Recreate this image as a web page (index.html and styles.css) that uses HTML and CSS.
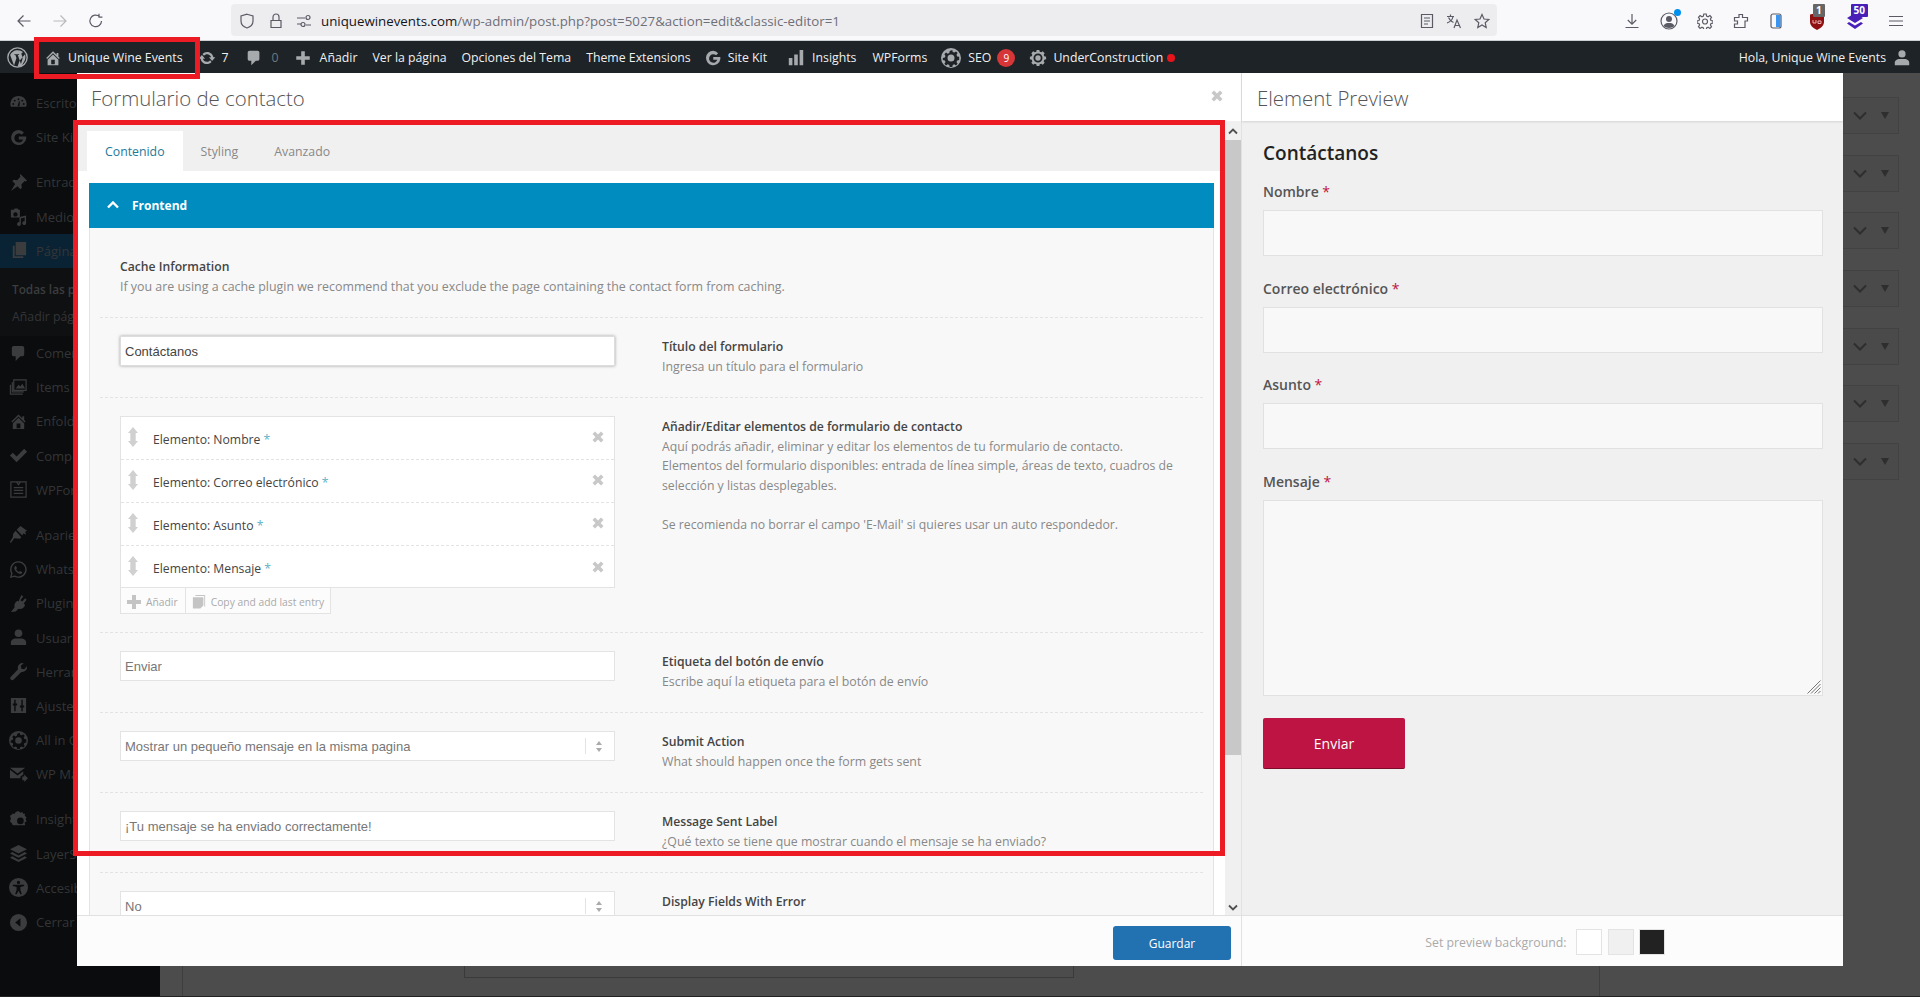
FILE: index.html
```html
<!DOCTYPE html>
<html lang="es">
<head>
<meta charset="UTF-8">
<title>Formulario de contacto</title>
<link rel="stylesheet" href="styles.css">
</head>
<body>
<svg class="defs" width="0" height="0">
  <symbol id="i-x" viewBox="0 0 12 12"><path d="M3 0.5 6 3.5 9 0.5 11.5 3 8.5 6 11.5 9 9 11.5 6 8.5 3 11.5 0.5 9 3.5 6 0.5 3z"/></symbol>
  <symbol id="i-sort" viewBox="0 0 12 20"><path d="M6 0 11 6H8.700v8H11L6 20 1 14H3.300V6H1z"/></symbol>
  <symbol id="i-updown" viewBox="0 0 6 11"><path d="M3 0 6 4H0zM3 11 0 7h6z"/></symbol>
  <symbol id="i-chev" viewBox="0 0 14 9"><path d="M1 1.5 7 7.5 13 1.5" fill="none" stroke="currentColor" stroke-width="2"/></symbol>
  <symbol id="i-tri" viewBox="0 0 8 7"><path d="M0 0H8L4 7z"/></symbol>
  <symbol id="i-home" viewBox="0 0 20 20"><path d="M16 8.5l1.53 1.53-1.06 1.06L10 4.62l-6.47 6.47-1.06-1.06L10 2.5l4 4v-2h2v4zm-6-2.46l6 5.99V18H4v-5.97zM12 17v-5H8v5h4z"/></symbol>
  <symbol id="i-comment" viewBox="0 0 20 20"><path d="M5 2h9c1.1 0 2 .9 2 2v7c0 1.1-.9 2-2 2h-2l-5 5v-5H5c-1.1 0-2-.9-2-2V4c0-1.1.9-2 2-2z"/></symbol>
  <symbol id="i-g" viewBox="0 0 20 20"><path d="M10.2 2a8 8 0 1 0 7.9 9.3c.1-.8.1-1.600 0-2.300h-7.800v3h4.500a4.700 4.700 0 1 1-1.400-5l2.300-2.300A8 8 0 0 0 10.200 2z"/></symbol>
  <symbol id="i-gear" viewBox="0 0 20 20"><path fill-rule="evenodd" d="M10 0a10 10 0 1 1 0 20 10 10 0 0 1 0-20zM8.700 3l-.4 2-1.600.7-1.700-1.100-1.600 1.700 1.100 1.600-.7 1.600-2 .4v2.200l2 .4.700 1.600-1.100 1.700 1.600 1.600 1.700-1.100 1.600.7.4 2h2.600l.4-2 1.600-.7 1.700 1.100 1.600-1.600-1.100-1.700.7-1.600 2-.4V8.800l-2-.4-.7-1.600 1.100-1.700-1.600-1.600-1.700 1.100-1.600-.7-.4-2zM10 6.500a3.500 3.500 0 1 1 0 7 3.500 3.500 0 0 1 0-7z"/></symbol>
  <symbol id="i-user" viewBox="0 0 20 20"><circle cx="10" cy="5.500" r="4"/><path d="M2 18v-3c0-2.500 3-4 5-4h6c2 0 5 1.500 5 4v3z"/></symbol>
  <symbol id="i-dash" viewBox="0 0 20 20"><path fill-rule="evenodd" d="M10 2a8.500 8.500 0 0 1 8 11.500H2A8.500 8.500 0 0 1 10 2zM6 6a1 1 0 1 0 0 2 1 1 0 0 0 0-2zm4-1.500a1 1 0 1 0 0 2 1 1 0 0 0 0-2zm4 1.500a1 1 0 1 0 0 2 1 1 0 0 0 0-2zM4.500 9.500a1 1 0 1 0 0 2 1 1 0 0 0 0-2zm11 0a1 1 0 1 0 0 2 1 1 0 0 0 0-2zM9 13h2l.5-5-1-.5z"/></symbol>
  <symbol id="i-pin" viewBox="0 0 20 20"><path d="M12 1l7 7-1.500 1-1-.5-3.500 3.500.5 3.500-1.500 1.500-3-3L2 19l4.500-7.500-3-3L5 7l3.500.5L12 4l-.5-1.500z"/></symbol>
  <symbol id="i-media" viewBox="0 0 20 20"><path fill-rule="evenodd" d="M2 3h3l1-1.500h3L10 3h1.500v8H2zm4.800 2.500a2.300 2.300 0 1 0 0 4.600 2.300 2.300 0 0 0 0-4.600zM18 9v8a2 2 0 1 1-1.500-2V11l-4 1v6a2 2 0 1 1-1.500-2v-5.500z"/></symbol>
  <symbol id="i-page" viewBox="0 0 20 20"><path d="M7 1h11v14H7zM4 5h2v11h9v2H4z"/></symbol>
  <symbol id="i-items" viewBox="0 0 20 20"><path fill="none" stroke="currentColor" stroke-width="1.300" d="M5 2h13v11H5zM3.500 4.500v10h12M1.500 7v10h13"/><path d="M7 11l3-4 2 2 2-3 3 5z"/></symbol>
  <symbol id="i-check" viewBox="0 0 20 20"><path d="M1 10l3-3 4 4 8-8 3 3L8 17z"/></symbol>
  <symbol id="i-form" viewBox="0 0 20 20"><path fill="none" stroke="currentColor" stroke-width="1.300" d="M2 2h16v16H2zM5 8h10M5 11h10M5 14h10M8 2l2 3 2-3"/></symbol>
  <symbol id="i-brush" viewBox="0 0 20 20"><path d="M8 5l4-4 7 5-2 1 1 3-3-1-1 2zM7 6l6 7-1.500 1.500-6-.5L2 19l-1-1 3-5 .5-4z"/></symbol>
  <symbol id="i-whats" viewBox="0 0 20 20"><path fill="none" stroke="currentColor" stroke-width="1.500" d="M10 2a8 8 0 1 1-4 15l-4 1 1-4A8 8 0 0 1 10 2z"/><path d="M7 6l1.500 2.500-1 1.200c.7 1.300 1.600 2.200 3 2.900l1.200-1 2.300 1.400c-.3 1.500-1.800 2-3 1.600C8.500 14 6 11.500 5.600 9 5.400 7.800 6 6.500 7 6z"/></symbol>
  <symbol id="i-plug" viewBox="0 0 20 20"><path d="M13 1l2 1.500-3 4 2 1.500 3-3.500 1.500 1.500-3 4 1.500 1.500c-1 3-4 5-7 4l-3 3-5 .5 4-5c-1-3 1-6 3-7l1 1z"/></symbol>
  <symbol id="i-wrench" viewBox="0 0 20 20"><path d="M14 1a5 5 0 0 1 1.500.2L12.500 4l.5 3 3 .5 2.800-3A5 5 0 0 1 13 10.500L5 18.500a2 2 0 0 1-3-3L9.500 7.500A5 5 0 0 1 14 1z"/></symbol>
  <symbol id="i-sliders" viewBox="0 0 20 20"><path fill-rule="evenodd" d="M2 2h16v16H2zm3.500 2v4H4v2h1.500v6h1.500v-6h1.500V8H7V4zm7.500 0v6h-1.500v2H13v4h1.500v-4H16v-2h-1.500V4z"/></symbol>
  <symbol id="i-mail" viewBox="0 0 20 20"><path d="M1 3h16l-8 6zM1 5l8 6 6-4.500V10l-3 2v2H1zM14 12h2v-2l4 4-4 4v-2h-2z"/></symbol>
  <symbol id="i-insight" viewBox="0 0 20 20"><path fill-rule="evenodd" d="M10 1l2 2 2-1 1 2h2l-.5 2 2 1.500-1 2 1 2.500-2 1 .5 3H4l-1-2-2-2 1-3-1-3 2-1V4h3l1-2zm2 7a3.500 3.500 0 1 0 0 7 3.500 3.500 0 0 0 0-7z"/></symbol>
  <symbol id="i-layers" viewBox="0 0 20 20"><path d="M10 1l9 4.500L10 10 1 5.500zM3.500 8.500L10 12l6.500-3.500 2.500 1.500-9 4.500L1 10zM3.500 13L10 16.500 16.500 13l2.500 1.500L10 19l-9-4.500z"/></symbol>
  <symbol id="i-access" viewBox="0 0 20 20"><path fill-rule="evenodd" d="M10 0a10 10 0 1 1 0 20 10 10 0 0 1 0-20zm0 3a1.700 1.700 0 1 0 0 3.400A1.700 1.700 0 0 0 10 3zM4 7v1.500l4 1v3L6.500 17H8l2-3.500 2 3.500h1.500L12 12.500v-3l4-1V7z"/></symbol>
  <symbol id="i-back" viewBox="0 0 20 20"><path fill-rule="evenodd" d="M10 1a9 9 0 1 1 0 18 9 9 0 0 1 0-18zm2 4.500L6.500 10l5.500 4.500z"/></symbol>
</svg>

<header class="browser-bar">
  <div class="nav-btns">
    <svg class="tool" viewBox="0 0 16 16"><path d="M14.500 8H2M7.500 2.500 2 8l5.500 5.500"/></svg>
    <svg class="tool tool-off" viewBox="0 0 16 16"><path d="M1.500 8H14M8.500 2.500 14 8l-5.500 5.500"/></svg>
    <svg class="tool" viewBox="0 0 16 16"><path d="M13.500 8A5.800 5.800 0 1 1 11.500 3.500M11 .8v3.400h3.400"/></svg>
  </div>
  <div class="url-bar">
    <svg class="tool" viewBox="0 0 16 16"><path d="M8 1.200 14 3v5c0 3.500-3 6-6 7-3-1-6-3.500-6-7V3z"/></svg>
    <svg class="tool tool-lock" viewBox="0 0 16 16"><path d="M3 7.500h10V14.500H3zM5 7.500V4a3 3 0 0 1 6 0v3.500"/></svg>
    <svg class="tool tool-perm" viewBox="0 0 16 16"><path d="M1 5h8M1 11h4M10 12h5"/><circle cx="12" cy="4.500" r="2"/><circle cx="7" cy="11.500" r="2"/></svg>
    <div class="url-text"><span class="url-host">uniquewinevents.com</span>/wp-admin/post.php?post=5027&amp;action=edit&amp;classic-editor=1</div>
    <div class="url-actions">
      <svg class="tool" viewBox="0 0 16 16"><path d="M2.500 1.500h11v13h-11zM5 5h6M5 8h6M5 11h4"/></svg>
      <svg class="tool tool-trans" viewBox="0 0 16 16"><path d="M1 3.500h7M4.500 1.500v2M7 3.500c-.5 3-3 5.500-6 6.500M2.500 4.500c1 2.500 2.500 4 5 5M8 15l3-8 3.500 8M9 12.500h5"/></svg>
      <svg class="tool" viewBox="0 0 16 16"><path d="M8 1.500 10 6l4.800.5-3.600 3.200 1 4.800L8 12l-4.200 2.500 1-4.800L1.200 6.500 6 6z"/></svg>
    </div>
  </div>
  <div class="browser-tools">
    <svg class="tool" viewBox="0 0 16 16"><path d="M8 1v10M3.800 7 8 11.200 12.200 7M1.500 14.500h13"/></svg>
    <div class="tool-acc">
      <svg class="tool tool-large" viewBox="0 0 18 18"><circle cx="9" cy="9" r="8"/><circle class="solid" cx="9" cy="7" r="3"/><path class="solid" d="M3.500 14c1-2.500 3-3 5.500-3s4.500.5 5.500 3c-3 2.600-8 2.600-11 0z"/></svg>
      <span class="acc-dot"></span>
    </div>
    <svg class="tool" viewBox="0 0 16 16"><path d="M6.800 1h2.400l.4 2 1.500.7 1.800-1.100 1.600 1.700-1.100 1.700.6 1.500 2 .4v2.200l-2 .4-.6 1.500 1.100 1.700-1.600 1.700-1.800-1.100-1.500.7-.4 2H6.800l-.4-2-1.500-.7-1.800 1.100-1.600-1.700 1.100-1.700-.6-1.500-2-.4V7.900l2-.4.6-1.500-1.100-1.700 1.600-1.700 1.800 1.100 1.500-.7z"/><circle cx="8" cy="8.500" r="2.500"/></svg>
    <svg class="tool" viewBox="0 0 16 16"><path d="M6 1.500h3.500v3h5v3.500H12v6.500H1.500V11h3V8h-3V4.500H6z"/></svg>
    <svg class="tool" viewBox="0 0 16 16"><rect x="3" y="1" width="10" height="14" rx="2"/><path class="phone-fill" d="M8 2h4a.6.6 0 0 1 .5.500V13.500a.6.6 0 0 1-.5.500H8z"/></svg>
    <div class="ext ext-first">
      <svg class="ext-icon" viewBox="0 0 16 18"><path fill="#8f1010" d="M1 2.500 8 1l7 1.500V10c0 3.500-3.500 6.500-7 8-3.500-1.500-7-4.500-7-8z"/><path fill="none" stroke="#e8b0b0" stroke-width="1" d="M4 8v3h3V8M9 9h3v2.500H9z"/></svg>
      <span class="ext-badge ext-badge-grey">1</span>
    </div>
    <div class="ext">
      <svg class="ext-icon" viewBox="0 0 18 18"><path fill="#4a1fb8" d="M9 1l8 5-8 5-8-5zM3 10l6 3.500L15 10l2 1.500L9 17l-8-5.500z"/></svg>
      <span class="ext-badge ext-badge-purple">50</span>
    </div>
    <svg class="tool tool-menu" viewBox="0 0 14 12"><path d="M0 1.500h14M0 6h14M0 10.500h14"/></svg>
  </div>
</header>

<nav class="admin-bar">
  <div class="ab-item ab-logo">
    <svg viewBox="0 0 20 20" class="ab-icon-wp"><circle cx="10" cy="10" r="9.200" fill="none" stroke="currentColor" stroke-width="1.300"/><path d="M3 7.500l3.700 10 2.300-7-1-3H7V6.800h4.500v.7h-1.200l3 8.800 1.500-5c.6-2-.8-3.200-1-4.500-.1-1 .8-1.800 1.700-1.700A8 8 0 0 0 3 7.500zM17.200 7c.7 2.500.4 5-1.300 7.500L14 18c-1.300.6-2.500.9-4 .8l2-5.800z"/></svg>
  </div>
  <div class="ab-item ab-site"><svg class="ab-icon"><use href="#i-home"/></svg>Unique Wine Events</div>
  <div class="ab-item">
    <svg class="ab-icon" viewBox="0 0 20 20"><path d="M10.200 3.280c3.530 0 6.430 2.610 6.920 6h2.080l-3.500 4-3.500-4h2.320c-.45-1.970-2.210-3.450-4.320-3.450-1.450 0-2.730.71-3.540 1.780L4.950 5.660C6.230 4.200 8.110 3.280 10.200 3.280zm-.4 13.440c-3.520 0-6.430-2.610-6.920-6H.8l3.500-4c1.170 1.330 2.330 2.670 3.500 4H5.480c.45 1.970 2.210 3.450 4.320 3.450 1.450 0 2.730-.71 3.540-1.780l1.710 1.950c-1.280 1.460-3.150 2.380-5.250 2.380z"/></svg>7
  </div>
  <div class="ab-item ab-muted"><svg class="ab-icon"><use href="#i-comment"/></svg>0</div>
  <div class="ab-item ab-add"><svg class="ab-icon" viewBox="0 0 20 20"><path d="M8 2.500h4v5.500h5.500v4H12v5.500H8V12H2.500V8H8z"/></svg>Añadir</div>
  <div class="ab-item">Ver la página</div>
  <div class="ab-item">Opciones del Tema</div>
  <div class="ab-item">Theme Extensions</div>
  <div class="ab-item ab-kit"><svg class="ab-icon"><use href="#i-g"/></svg>Site Kit</div>
  <div class="ab-item ab-bars"><svg class="ab-icon" viewBox="0 0 20 20"><path d="M2 10h4v8H2zM8 6h4v12H8zM14 1h4v17h-4z"/></svg>Insights</div>
  <div class="ab-item ab-wpforms">WPForms</div>
  <div class="ab-item ab-seo"><svg class="ab-icon ab-icon-seo"><use href="#i-gear"/></svg>SEO<span class="ab-badge">9</span></div>
  <div class="ab-item ab-under"><svg class="ab-icon" viewBox="0 0 20 20"><path fill-rule="evenodd" d="M8.500 1h3l.4 2 1.700.7 1.700-1.100 2.100 2.100-1.100 1.700.7 1.700 2 .4v3l-2 .4-.7 1.700 1.100 1.700-2.100 2.100-1.700-1.100-1.700.7-.4 2h-3l-.4-2-1.700-.7-1.700 1.100-2.100-2.100 1.100-1.700-.7-1.700-2-.4v-3l2-.4.7-1.700-1.100-1.700 2.100-2.100 1.700 1.100 1.700-.7zM10 5a5 5 0 1 0 0 10 5 5 0 0 0 0-10zm0 2a3 3 0 1 1 0 6 3 3 0 0 1 0-6z"/></svg>UnderConstruction<span class="ab-dot"></span></div>
  <div class="ab-item ab-account">Hola, Unique Wine Events<svg class="ab-icon"><use href="#i-user"/></svg></div>
</nav>

<div class="stage">
  <aside class="wp-menu">
    <div class="menu-row"><svg><use href="#i-dash"/></svg>Escritorio</div>
    <div class="menu-row"><svg><use href="#i-g"/></svg>Site Kit</div>
    <div class="menu-row menu-gap"><svg><use href="#i-pin"/></svg>Entradas</div>
    <div class="menu-row"><svg><use href="#i-media"/></svg>Medios</div>
    <div class="menu-row menu-active"><svg><use href="#i-page"/></svg>Páginas</div>
    <div class="menu-sub">
      <div class="sub-row sub-current">Todas las páginas</div>
      <div class="sub-row">Añadir página nueva</div>
    </div>
    <div class="menu-row"><svg><use href="#i-comment"/></svg>Comentarios</div>
    <div class="menu-row"><svg><use href="#i-items"/></svg>Items</div>
    <div class="menu-row"><svg><use href="#i-home"/></svg>Enfold</div>
    <div class="menu-row"><svg><use href="#i-check"/></svg>Compras</div>
    <div class="menu-row"><svg><use href="#i-form"/></svg>WPForms</div>
    <div class="menu-row menu-gap"><svg><use href="#i-brush"/></svg>Apariencia</div>
    <div class="menu-row"><svg><use href="#i-whats"/></svg>WhatsApp</div>
    <div class="menu-row"><svg><use href="#i-plug"/></svg>Plugins</div>
    <div class="menu-row"><svg><use href="#i-user"/></svg>Usuarios</div>
    <div class="menu-row"><svg><use href="#i-wrench"/></svg>Herramientas</div>
    <div class="menu-row"><svg><use href="#i-sliders"/></svg>Ajustes</div>
    <div class="menu-row"><svg><use href="#i-gear"/></svg>All in One SEO</div>
    <div class="menu-row"><svg><use href="#i-mail"/></svg>WP Mail SMTP</div>
    <div class="menu-row menu-gap"><svg><use href="#i-insight"/></svg>Insights</div>
    <div class="menu-row"><svg><use href="#i-layers"/></svg>LayerSlider</div>
    <div class="menu-row"><svg><use href="#i-access"/></svg>Accesibilidad</div>
    <div class="menu-row"><svg><use href="#i-back"/></svg>Cerrar menú</div>
  </aside>

  <main class="wp-main">
    <div class="wp-edit"><div class="wp-box"></div></div>
    <div class="wp-drops">
      <div class="drop"><svg class="drop-chev"><use href="#i-chev"/></svg><svg class="drop-tri"><use href="#i-tri"/></svg></div>
      <div class="drop"><svg class="drop-chev"><use href="#i-chev"/></svg><svg class="drop-tri"><use href="#i-tri"/></svg></div>
      <div class="drop"><svg class="drop-chev"><use href="#i-chev"/></svg><svg class="drop-tri"><use href="#i-tri"/></svg></div>
      <div class="drop"><svg class="drop-chev"><use href="#i-chev"/></svg><svg class="drop-tri"><use href="#i-tri"/></svg></div>
      <div class="drop"><svg class="drop-chev"><use href="#i-chev"/></svg><svg class="drop-tri"><use href="#i-tri"/></svg></div>
      <div class="drop"><svg class="drop-chev"><use href="#i-chev"/></svg><svg class="drop-tri"><use href="#i-tri"/></svg></div>
      <div class="drop"><svg class="drop-chev"><use href="#i-chev"/></svg><svg class="drop-tri"><use href="#i-tri"/></svg></div>
    </div>
  </main>

  <!-- ventana modal del elemento -->
  <section class="modal">
    <div class="modal-left">
      <div class="modal-head">
        <h1 class="modal-title">Formulario de contacto</h1>
        <svg class="modal-close"><use href="#i-x"/></svg>
      </div>
      <div class="modal-scroll">
        <div class="modal-content">
          <div class="tabs">
            <div class="tab tab-active">Contenido</div>
            <div class="tab">Styling</div>
            <div class="tab">Avanzado</div>
          </div>
          <div class="toggle-head">
            <svg class="toggle-chev" viewBox="0 0 12 8"><path d="M1 6.500 6 1.500 11 6.500" fill="none" stroke="#fff" stroke-width="2.400"/></svg>
            Frontend
          </div>
          <div class="toggle-body">
            <div class="row-info">
              <h4 class="opt-title">Cache Information</h4>
              <p class="opt-desc opt-desc-wide">If you are using a cache plugin we recommend that you exclude the page containing the contact form from caching.</p>
            </div>

            <div class="opt-row">
              <div class="opt-field"><input class="text-input text-focus" type="text" value="Contáctanos"></div>
              <div class="opt-text">
                <h4 class="opt-title">Título del formulario</h4>
                <p class="opt-desc">Ingresa un título para el formulario</p>
              </div>
            </div>

            <div class="opt-row opt-row-list">
              <div class="opt-field">
                <div class="el-list">
                  <div class="el-row"><svg class="el-sort"><use href="#i-sort"/></svg><span class="el-name">Elemento: Nombre <b class="el-req">*</b></span><svg class="el-del"><use href="#i-x"/></svg></div>
                  <div class="el-row"><svg class="el-sort"><use href="#i-sort"/></svg><span class="el-name">Elemento: Correo electrónico <b class="el-req">*</b></span><svg class="el-del"><use href="#i-x"/></svg></div>
                  <div class="el-row"><svg class="el-sort"><use href="#i-sort"/></svg><span class="el-name">Elemento: Asunto <b class="el-req">*</b></span><svg class="el-del"><use href="#i-x"/></svg></div>
                  <div class="el-row"><svg class="el-sort"><use href="#i-sort"/></svg><span class="el-name">Elemento: Mensaje <b class="el-req">*</b></span><svg class="el-del"><use href="#i-x"/></svg></div>
                </div>
                <div class="el-actions">
                  <div class="el-btn"><svg viewBox="0 0 14 14"><path d="M5 0h4v5h5v4H9v5H5V9H0V5h5z"/></svg>Añadir</div>
                  <div class="el-btn"><svg viewBox="0 0 14 16"><path d="M3 0h11v13h-1V1H3zM0 2.500h12V12l-3.500 3.500H0z"/></svg>Copy and add last entry</div>
                </div>
              </div>
              <div class="opt-text">
                <h4 class="opt-title">Añadir/Editar elementos de formulario de contacto</h4>
                <p class="opt-desc opt-desc-list">Aquí podrás añadir, eliminar y editar los elementos de tu formulario de contacto.<br>Elementos del formulario disponibles: entrada de línea simple, áreas de texto, cuadros de<br>selección y listas desplegables.<br><br>Se recomienda no borrar el campo 'E-Mail' si quieres usar un auto respondedor.</p>
              </div>
            </div>

            <div class="opt-row">
              <div class="opt-field"><input class="text-input" type="text" value="Enviar"></div>
              <div class="opt-text">
                <h4 class="opt-title">Etiqueta del botón de envío</h4>
                <p class="opt-desc">Escribe aquí la etiqueta para el botón de envío</p>
              </div>
            </div>

            <div class="opt-row">
              <div class="opt-field">
                <div class="select-box"><span class="select-text">Mostrar un pequeño mensaje en la misma pagina</span><span class="select-arrow"><svg><use href="#i-updown"/></svg></span></div>
              </div>
              <div class="opt-text">
                <h4 class="opt-title">Submit Action</h4>
                <p class="opt-desc">What should happen once the form gets sent</p>
              </div>
            </div>

            <div class="opt-row">
              <div class="opt-field"><input class="text-input" type="text" value="¡Tu mensaje se ha enviado correctamente!"></div>
              <div class="opt-text">
                <h4 class="opt-title">Message Sent Label</h4>
                <p class="opt-desc">¿Qué texto se tiene que mostrar cuando el mensaje se ha enviado?</p>
              </div>
            </div>

            <div class="opt-row">
              <div class="opt-field">
                <div class="select-box"><span class="select-text">No</span><span class="select-arrow"><svg><use href="#i-updown"/></svg></span></div>
              </div>
              <div class="opt-text">
                <h4 class="opt-title">Display Fields With Error</h4>
              </div>
            </div>
          </div>
        </div>
        <div class="scrollbar">
          <svg class="scroll-arrow" viewBox="0 0 10 7"><path d="M1 5.500 5 1.500 9 5.500" fill="none" stroke="#505050" stroke-width="1.800"/></svg>
          <div class="scroll-thumb"></div>
          <svg class="scroll-arrow scroll-down" viewBox="0 0 10 7"><path d="M1 1.500 5 5.500 9 1.500" fill="none" stroke="#505050" stroke-width="1.800"/></svg>
        </div>
      </div>
      <div class="modal-foot">
        <button class="save-btn" type="button">Guardar</button>
      </div>
    </div>

    <div class="modal-right">
      <div class="modal-head modal-head-preview">
        <h2 class="modal-title">Element Preview</h2>
      </div>
      <div class="preview">
        <h3 class="form-title">Contáctanos</h3>
        <div class="form-group"><label class="form-label">Nombre <b class="form-req">*</b></label><input class="form-input" type="text"></div>
        <div class="form-group"><label class="form-label">Correo electrónico <b class="form-req">*</b></label><input class="form-input" type="text"></div>
        <div class="form-group"><label class="form-label">Asunto <b class="form-req">*</b></label><input class="form-input" type="text"></div>
        <div class="form-group form-group-area">
          <label class="form-label">Mensaje <b class="form-req">*</b></label>
          <textarea class="form-input form-area"></textarea>
          <svg class="area-grip" viewBox="0 0 14 14"><path d="M13.500 0.500 0.500 13.500M13.500 4 4 13.500M13.500 7.500 7.500 13.500M13.500 11 11 13.500"/></svg>
        </div>
        <button class="send-btn" type="button">Enviar</button>
      </div>
      <div class="modal-foot modal-foot-preview">
        <span class="swatch-label">Set preview background:</span>
        <span class="swatch swatch-white"></span>
        <span class="swatch swatch-grey"></span>
        <span class="swatch swatch-dark"></span>
      </div>
    </div>
  </section>

  <!-- marcos rojos de la captura -->
  <div class="mark mark-form"></div>
</div>
<div class="mark mark-site"></div>
<div class="page-edge"></div>
</body>
</html>
```

FILE: styles.css
```css
* {
  box-sizing: border-box;
}

html, body {
  height: 100%;
}

body {
  margin: 0;
  overflow: hidden;
  display: flex;
  flex-direction: column;
  position: relative;
  font-family: "Open Sans", Arial, sans-serif;
  font-size: 12px;
  color: #444;
  background-color: #4c4c4c;
}

.defs {
  position: absolute;
}

/* barra del navegador */
.browser-bar {
  height: 41px;
  flex: none;
  display: flex;
  align-items: flex-start;
  background-color: #f9f9fb;
  border-bottom: 1px solid #ccd0d4;
}

.tool {
  width: 16px;
  height: 16px;
  flex: none;
  fill: none;
  stroke: #5b5b66;
  stroke-width: 1.2;
}

.tool .solid {
  fill: #5b5b66;
  stroke: none;
}

.tool-off {
  stroke: #b9b9be;
}

.nav-btns {
  display: flex;
  gap: 20px;
  padding: 13px 0 0 16px;
  width: 231px;
}

.url-bar {
  width: 1266px;
  height: 32px;
  margin-top: 4px;
  display: flex;
  align-items: center;
  padding: 1px 0 0 8px;
  background-color: #ededf0;
  border-radius: 4px;
}

.tool-lock {
  margin-left: 13px;
}

.tool-perm {
  margin-left: 12px;
}

.url-text {
  margin-left: 9px;
  font-size: 13.3px;
  color: #6f6f78;
}

.url-host {
  color: #15141a;
}

.url-actions {
  margin-left: auto;
  padding-right: 7px;
  display: flex;
  gap: 11px;
}

.tool-trans {
  margin-right: 1px;
}

.browser-tools {
  display: flex;
  align-items: center;
  height: 40px;
  padding: 1px 0 0 127px;
  gap: 19.5px;
}

.tool-acc {
  position: relative;
  height: 18px;
}

.tool-large {
  width: 18px;
  height: 18px;
}

.acc-dot {
  position: absolute;
  top: -3px;
  right: -3px;
  width: 7px;
  height: 7px;
  border-radius: 50%;
  background-color: #0090ed;
}

.phone-fill {
  fill: #3a94f0;
  stroke: none;
}

.ext {
  position: relative;
  width: 18px;
  height: 18px;
}

.ext-first {
  margin-left: 4.5px;
}

.ext-icon {
  width: 18px;
  height: 18px;
  display: block;
}

.ext-badge {
  position: absolute;
  top: -8px;
  left: 5px;
  height: 13px;
  padding: 0 3px;
  font-size: 10px;
  font-weight: 700;
  line-height: 13px;
  color: #fff;
  border-radius: 1px;
}

.ext-badge-grey {
  background-color: #666;
}

.ext-badge-purple {
  background-color: #4a1fb8;
}

.tool-menu {
  width: 14px;
  height: 12px;
  margin-left: 6px;
}

/* barra de administracion */
.admin-bar {
  height: 32px;
  flex: none;
  display: flex;
  align-items: center;
  padding: 1px 0 0;
  background-color: #1d2327;
  color: #f0f0f1;
  font-size: 12.3px;
}

.ab-item {
  display: flex;
  align-items: center;
  padding: 0 7.5px;
  white-space: nowrap;
}

.ab-icon {
  width: 18px;
  height: 18px;
  flex: none;
  margin-right: 6px;
  fill: #a7aaad;
}

.ab-logo {
  width: 36px;
  padding: 0 0 0 7px;
  color: #a7aaad;
}

.ab-icon-wp {
  width: 21px;
  height: 21px;
  fill: #a7aaad;
}

.ab-site {
  padding-left: 8px;
}

.ab-muted {
  color: #72777c;
  margin-left: 1px;
}

.ab-muted .ab-icon {
  margin-right: 9px;
}

.ab-add .ab-icon {
  margin-right: 8px;
}

.ab-kit {
  margin-left: -2px;
}

.ab-bars {
  margin-left: 5px;
}

.ab-bars .ab-icon {
  margin-right: 7px;
}

.ab-wpforms {
  margin-left: 1px;
}

.ab-seo {
  margin-left: -1px;
}

.ab-seo .ab-icon-seo {
  width: 20px;
  height: 20px;
  margin-right: 7px;
}

.ab-under {
  margin-left: -1px;
}

.ab-badge {
  width: 18px;
  height: 18px;
  margin-left: 6px;
  border-radius: 50%;
  background-color: #d63638;
  font-size: 10px;
  line-height: 18px;
  text-align: center;
  color: #fff;
}

.ab-dot {
  width: 8px;
  height: 8px;
  margin-left: 4px;
  border-radius: 50%;
  background-color: #e8141c;
}

.ab-account {
  margin-left: auto;
  padding-right: 9px;
}

.ab-account .ab-icon {
  margin: 0 0 0 7px;
}

/* fondo oscurecido */
.stage {
  flex: 1;
  min-height: 0;
  display: flex;
  position: relative;
}

.wp-menu {
  width: 160px;
  flex: none;
  padding-top: 13px;
  background-color: #0a0c0e;
  font-size: 13px;
  color: #343536;
  white-space: nowrap;
  overflow: hidden;
}

.menu-row {
  height: 34.2px;
  display: flex;
  align-items: center;
  padding-left: 9px;
}

.menu-row svg {
  width: 19px;
  height: 19px;
  flex: none;
  margin-right: 8px;
  fill: #3b3c3d;
  color: #3b3c3d;
}

.menu-gap {
  margin-top: 11px;
}

.menu-active {
  background-color: #0a2334;
}

.menu-sub {
  height: 68px;
  padding-top: 7px;
  background-color: #0e1012;
  margin-bottom: 0;
}

.sub-row {
  height: 28px;
  line-height: 28px;
  padding-left: 12px;
  font-size: 12.3px;
}

.sub-current {
  font-size: 11.8px;
  font-weight: 600;
  color: #3c3d3e;
}

.wp-main {
  flex: 1;
  display: flex;
  overflow: hidden;
}

.wp-edit {
  width: 1418px;
  flex: none;
  margin-left: 22px;
  border-left: 1px solid #3e3e3e;
  border-right: 1px solid #3e3e3e;
}

.wp-box {
  width: 610px;
  height: 60px;
  margin: 845px 0 0 281px;
  border: 1px solid #3a3a3a;
}

.wp-drops {
  flex: 1;
  display: flex;
  flex-direction: column;
  gap: 20.7px;
  padding: 24px 21px 0 0;
}

.drop {
  height: 37px;
  flex: none;
  display: flex;
  align-items: center;
  justify-content: flex-end;
  border: 1px solid #424242;
  background-color: #4a4a4a;
}

.drop-chev {
  width: 14px;
  height: 9px;
  color: #2e2e2e;
  margin-right: 14px;
}

.drop-tri {
  width: 8px;
  height: 7px;
  fill: #2e2e2e;
  margin-right: 9px;
}

/* modal */
.modal {
  position: absolute;
  left: 77px;
  top: 0;
  width: 1766px;
  height: 893px;
  display: flex;
  background-color: #fff;
}

.modal-left {
  width: 1165px;
  flex: none;
  display: flex;
  flex-direction: column;
  border-right: 1px solid #e1e1e1;
}

.modal-right {
  flex: 1;
  display: flex;
  flex-direction: column;
}

.modal-head {
  height: 48px;
  flex: none;
  display: flex;
  align-items: center;
  justify-content: space-between;
  padding: 2px 18px 0 14px;
}

.modal-head-preview {
  padding-left: 15px;
  box-shadow: 0 1px 2px rgba(0,0,0,0.12);
  position: relative;
}

.modal-title {
  margin: 0;
  font-size: 20.4px;
  font-weight: 300;
  color: #555;
}

.modal-close {
  width: 12px;
  height: 12px;
  margin-top: -4px;
  fill: #c8c8c8;
}

.modal-scroll {
  flex: 1;
  min-height: 0;
  display: flex;
}

.modal-content {
  flex: 1;
  min-width: 0;
  overflow: hidden;
}

.tabs {
  height: 50px;
  padding: 10px 0 0 10px;
  display: flex;
  background-color: #f0f0f0;
}

.tab {
  padding: 0 18px;
  font-size: 12.3px;
  line-height: 42px;
  color: #888;
}

.tab-active {
  background-color: #fff;
  color: #1d7a9a;
}

.toggle-head {
  height: 45px;
  margin: 12px 11px 0 12px;
  display: flex;
  align-items: center;
  padding-left: 18px;
  background-color: #008cbf;
  color: #fff;
  font-weight: 700;
}

.toggle-chev {
  width: 12px;
  height: 8px;
  margin: -2px 13px 0 0;
}

.toggle-body {
  margin: 0 11px 0 12px;
  padding: 0 10px;
  background-color: #f8f8f8;
  border-left: 1px solid #e4e4e4;
  border-right: 1px solid #e4e4e4;
}

.row-info {
  padding: 29px 20px 21px;
}

.opt-title {
  margin: 0;
  font-size: 12.2px;
  font-weight: 600;
  line-height: 19.5px;
  color: #444;
}

.opt-desc {
  margin: 0;
  font-size: 12.35px;
  line-height: 19.5px;
  color: #888;
}

.opt-desc-wide {
  font-size: 12.4px;
}

.opt-desc-list {
  font-size: 12.25px;
}

.opt-row {
  height: 80px;
  display: flex;
  padding: 18px 20px 0;
  border-top: 1px dashed #e3e3e3;
}

.opt-row-list {
  height: 235px;
}

.opt-field {
  width: 495px;
  flex: none;
}

.opt-text {
  margin-left: 47px;
  padding-top: 1px;
  flex: 1;
}

.text-input {
  width: 100%;
  height: 30px;
  padding: 0 4px;
  display: block;
  font-family: "Liberation Sans", Arial, sans-serif;
  font-size: 13px;
  color: #777;
  background-color: #fff;
  border: 1px solid #e3e3e3;
  outline: none;
}

.text-focus {
  color: #444;
  border-color: #ddd;
  box-shadow: 0 0 3px rgba(0,0,0,0.35);
}

.select-box {
  height: 30px;
  display: flex;
  align-items: center;
  padding-left: 4px;
  font-family: "Liberation Sans", Arial, sans-serif;
  font-size: 13px;
  color: #777;
  background-color: #fff;
  border: 1px solid #e3e3e3;
}

.select-text {
  flex: 1;
}

.select-arrow {
  width: 29px;
  height: 16px;
  display: flex;
  align-items: center;
  justify-content: center;
  padding-right: 3px;
  border-left: 1px solid #e3e3e3;
}

.select-arrow svg {
  width: 6px;
  height: 11px;
  fill: #aaa;
}

.el-list {
  height: 172px;
  background-color: #fff;
  border: 1px solid #e3e3e3;
}

.el-row {
  height: 43px;
  display: flex;
  align-items: center;
  padding: 0 10px 0 6px;
  border-bottom: 1px dashed #e3e3e3;
}

.el-row:last-child {
  border-bottom: 0;
}

.el-sort {
  width: 12px;
  height: 20px;
  flex: none;
  margin: -3px 14px 0 0;
  fill: #d0d0d0;
}

.el-name {
  flex: 1;
  margin-top: 2px;
  font-size: 12.2px;
}

.el-req {
  font-weight: 400;
  color: #5fb3c9;
}

.el-del {
  width: 12px;
  height: 12px;
  margin-top: -2px;
  fill: #c8c8c8;
}

.el-actions {
  display: flex;
  height: 26px;
}

.el-btn {
  display: flex;
  align-items: center;
  padding: 2px 7px 0 6px;
  font-size: 10.3px;
  color: #aaa;
  background-color: #fcfcfc;
  border: 1px solid #e3e3e3;
  border-top: 0;
}

.el-btn + .el-btn {
  padding-right: 6px;
  border-left: 0;
}

.el-btn svg {
  width: 14px;
  height: 14px;
  margin-right: 5px;
  fill: #c4c4c4;
}

.scrollbar {
  width: 16px;
  flex: none;
  display: flex;
  flex-direction: column;
  align-items: center;
  background-color: #f0f0f0;
}

.scroll-arrow {
  width: 10px;
  height: 7px;
  margin: 7px 0 5px;
}

.scroll-thumb {
  width: 100%;
  height: 615px;
  background-color: #c8c8c8;
}

.scroll-down {
  margin: auto 0 4px;
}

.modal-foot {
  height: 51px;
  flex: none;
  display: flex;
  justify-content: flex-end;
  padding: 10px 10px 0 0;
  background-color: #fcfcfc;
  border-top: 1px solid #e1e1e1;
}

.save-btn {
  width: 118px;
  height: 34px;
  border: 0;
  border-radius: 3px;
  background-color: #2271b1;
  color: #fff;
  font-family: "Open Sans", Arial, sans-serif;
  font-size: 12px;
}

.preview {
  flex: 1;
  min-height: 0;
  padding: 20px 20px 0 21px;
  background-color: #f0f0f0;
}

.form-title {
  margin: 0 0 17px;
  font-size: 19px;
  font-weight: 600;
  line-height: 24px;
  color: #222;
}

.form-group {
  margin-bottom: 22.7px;
}

.form-group-area {
  position: relative;
  margin-bottom: 21.7px;
}

.form-label {
  display: block;
  height: 20px;
  margin-bottom: 8px;
  font-size: 14px;
  font-weight: 600;
  line-height: 20px;
  color: #555;
}

.form-req {
  font-weight: 400;
  color: #bd1443;
}

.form-input {
  width: 100%;
  height: 46px;
  display: block;
  background-color: #f8f8f8;
  border: 1px solid #e1e1e1;
  outline: none;
}

.form-area {
  height: 196px;
  resize: none;
}

.area-grip {
  position: absolute;
  right: 2px;
  bottom: 2px;
  width: 14px;
  height: 14px;
  fill: none;
  stroke: #777;
  stroke-width: 1;
}

.send-btn {
  width: 142px;
  height: 51px;
  padding-top: 2px;
  border: 0;
  border-bottom: 1px solid #7d0c2b;
  border-radius: 2px;
  background-color: #bd1443;
  color: #fff;
  font-family: "Open Sans", Arial, sans-serif;
  font-size: 14px;
}

.modal-foot-preview {
  align-items: flex-start;
  gap: 5.5px;
  padding: 13px 178px 0 0;
  border-left: 0;
}

.swatch-label {
  margin-right: 4px;
  font-size: 12.3px;
  line-height: 27px;
  color: #aaa;
}

.swatch {
  width: 26px;
  height: 26px;
  border: 1px solid #e3e3e3;
}

.swatch-white {
  background-color: #fff;
}

.swatch-grey {
  background-color: #f0f0f0;
}

.swatch-dark {
  background-color: #222;
}

/* marcos rojos */
.mark {
  position: absolute;
  border: 5px solid #ed1c24;
  pointer-events: none;
}

.mark-site {
  left: 34px;
  top: 37px;
  width: 166px;
  height: 42px;
}

.mark-form {
  left: 73px;
  top: 47px;
  width: 1152px;
  height: 736px;
}

.page-edge {
  height: 1px;
  flex: none;
  background-color: #222;
}
```
